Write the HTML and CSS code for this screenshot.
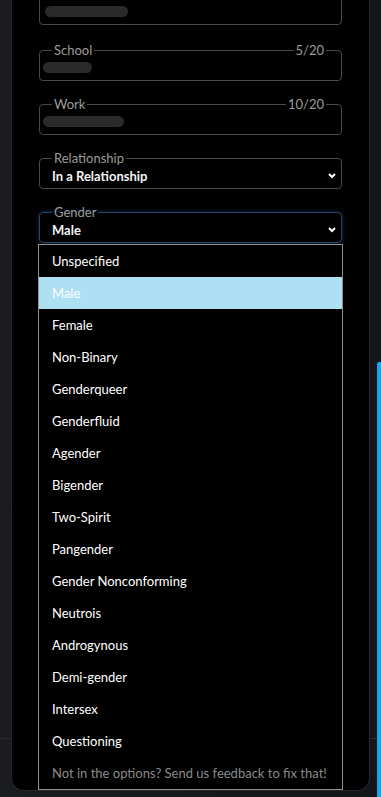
FILE: index.html
```html
<!DOCTYPE html>
<html lang="en">
<head>
    <meta charset="UTF-8">
    <title>Edit Profile</title>
    <link rel="stylesheet" href="styles.css">
</head>
<body>
    <div class="frame">
        <div class="panel">
            <form class="profile-form">
                <fieldset class="field first">
                    <div class="value"><span class="redacted" style="width: 83px; margin-left: 1px;"></span></div>
                </fieldset>

                <fieldset class="field">
                    <legend>School</legend>
                    <span class="counter">5/20</span>
                    <div class="value"><span class="redacted" style="width: 49px;"></span></div>
                </fieldset>

                <fieldset class="field">
                    <legend>Work</legend>
                    <span class="counter">10/20</span>
                    <div class="value"><span class="redacted" style="width: 81px;"></span></div>
                </fieldset>

                <fieldset class="field">
                    <legend>Relationship</legend>
                    <div class="value select-value">
                        <span>In a Relationship</span>
                        <svg class="chevron" width="8" height="6" viewBox="0 0 8 6"><polyline points="1,1 4,4 7,1" /></svg>
                    </div>
                </fieldset>

                <div class="gender-wrap">
                    <fieldset class="field focused">
                        <legend>Gender</legend>
                        <div class="value select-value">
                            <span>Male</span>
                            <svg class="chevron" width="8" height="6" viewBox="0 0 8 6"><polyline points="1,1 4,4 7,1" /></svg>
                        </div>
                    </fieldset>
                    <ul class="options">
                        <li>Unspecified</li>
                        <li class="selected">Male</li>
                        <li>Female</li>
                        <li>Non-Binary</li>
                        <li>Genderqueer</li>
                        <li>Genderfluid</li>
                        <li>Agender</li>
                        <li>Bigender</li>
                        <li>Two-Spirit</li>
                        <li>Pangender</li>
                        <li>Gender Nonconforming</li>
                        <li>Neutrois</li>
                        <li>Androgynous</li>
                        <li>Demi-gender</li>
                        <li>Intersex</li>
                        <li>Questioning</li>
                        <li class="hint">Not in the options? Send us feedback to fix that!</li>
                    </ul>
                </div>
            </form>
        </div>
        <div class="scroll-thumb"></div>
    </div>
</body>
</html>
```
FILE: styles.css
```css
body {
    margin: 0;
    padding: 0;
    height: 797px;
    overflow: hidden;
    background:
        linear-gradient(to bottom, transparent 738px, #2a2c30 738px, #2a2c30 739px, transparent 739px),
        linear-gradient(to right, #1a1c1f, #131518);
    font-family: Lato, "Liberation Sans", sans-serif;
    font-size: 13px;
    color: #fff;
}
.frame {
    position: relative;
    height: 797px;
}
.panel {
    margin: 0 11px;
    height: 790px;
    background-color: #000;
    border: 1px solid #25272c;
    border-top: none;
    border-radius: 0 0 13px 13px;
    overflow: hidden;
}
.profile-form {
    margin-top: -14px;
    padding: 0 27px;
}
.field {
    position: relative;
    margin: 0 0 16px;
    padding: 0 4px 1px 4px;
    border: 1px solid #4a4a4a;
    border-radius: 4px;
    min-width: 0;
}
.field.first {
    padding-top: 14px;
    margin-bottom: 18px;
}
.field legend {
    margin-left: 8px;
    padding: 0 2px;
    font-size: 13px;
    line-height: 14px;
    color: #9c9c9c;
}
.counter {
    position: absolute;
    top: -14px;
    right: 15px;
    padding: 0 2px;
    background-color: #000;
    font-size: 13px;
    line-height: 14px;
    color: #9c9c9c;
}
.value {
    height: 22px;
    display: flex;
    align-items: center;
}
.redacted {
    display: inline-block;
    height: 11px;
    margin-left: -1px;
    margin-top: -1px;
    background-color: #2a2a2a;
    border-radius: 6px;
}
.select-value {
    justify-content: space-between;
    padding-left: 8px;
    font-weight: bold;
    color: #f4f4f4;
}
.chevron {
    margin-right: 1px;
}
.chevron polyline {
    fill: none;
    stroke: #fff;
    stroke-width: 2;
}
.gender-wrap {
    position: relative;
}
.field.focused {
    border-color: #2b4566;
    box-shadow: 0 0 4px rgba(38, 90, 160, 0.55);
}
.options {
    position: absolute;
    top: calc(100% + 1px);
    left: -1px;
    right: -1px;
    margin: 0;
    padding: 0;
    list-style: none;
    background-color: #000;
    border: 1px solid #8f8f8f;
}
.options li {
    height: 32px;
    line-height: 32px;
    padding-left: 13px;
    white-space: nowrap;
}
.options li.selected {
    background-color: #aee0f4;
}
.options li.hint {
    color: #8a8a8a;
}
.scroll-thumb {
    position: absolute;
    top: 362px;
    right: 0;
    bottom: 0;
    width: 4px;
    background-color: #19a6ea;
    border-radius: 2px 0 0 0;
}
```
